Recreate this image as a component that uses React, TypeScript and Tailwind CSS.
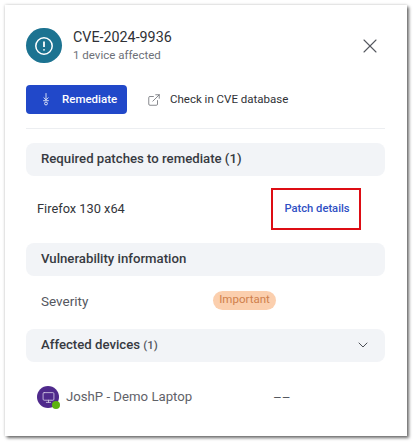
import { ChevronDown, ExternalLink, Monitor, X } from 'lucide-react';

function SectionHeader({ children, right }: { children: React.ReactNode; right?: React.ReactNode }) {
  return (
    <div className="flex h-[33px] items-center justify-between rounded-[8px] bg-[#f2f4f7] pb-[2px] pl-[15px] pr-[14px] text-[13.2px] font-medium text-[#373a41]">
      <div>{children}</div>
      {right}
    </div>
  );
}

export default function App() {
  return (
    <div className="h-[445px] w-[416px] bg-white pl-[5px] pt-[5px] font-['Roboto',sans-serif]">
      <div className="h-[431px] w-[402px] bg-white pl-[21px] pr-[22px] pt-[23px] shadow-[2px_2px_3px_rgba(0,0,0,0.55),0_0_3px_rgba(0,0,0,0.2)]">
        {/* Header */}
        <div className="flex items-center">
          <div className="flex h-[35px] w-[36px] items-center justify-center rounded-full bg-[#1c7391]">
            <svg viewBox="0 0 20 20" className="h-[20px] w-[20px]" fill="none" stroke="white" strokeWidth="1.5">
              <circle cx="10" cy="10" r="8.2" />
              <path d="M10 5.5v5.5M10 13.2v1.3" strokeWidth="1.8" />
            </svg>
          </div>
          <div className="ml-[11px] flex-1">
            <div className="text-[14.3px] leading-[19px] text-[#2f3136]">CVE-2024-9936</div>
            <div className="text-[11.5px] leading-[16px] text-[#6d7079]">1 device affected</div>
          </div>
          <X className="mr-[3px] h-[24px] w-[24px] text-[#55585f]" strokeWidth={1.1} />
        </div>

        {/* Actions */}
        <div className="mt-[22px] flex items-center border-b border-[#eceef1] pb-[14px]">
          <button className="flex h-[29px] w-[101px] items-center rounded-[4px] bg-[#2148c9] pl-[16px] text-[11.5px] font-medium text-white">
            <svg viewBox="0 0 10 16" className="h-[13px] w-[8px]" fill="none" stroke="white" strokeWidth="1">
              <path d="M5 0v8M2 5.5 5 8.5 8 5.5M1.5 9.5h7" />
              <circle cx="5" cy="13" r="1.8" />
            </svg>
            <span className="ml-[12px]">Remediate</span>
          </button>
          <ExternalLink className="ml-[20px] h-[14px] w-[14px] text-[#55585f]" strokeWidth={1.2} />
          <span className="ml-[9px] text-[11.5px] text-[#2f3136]">Check in CVE database</span>
        </div>

        {/* Required patches */}
        <div className="mt-[14px]">
          <SectionHeader>Required patches to remediate (1)</SectionHeader>
        </div>
        <div className="flex h-[67px] items-center justify-between pb-[2px] pl-[11px]">
          <span className="text-[12.8px] text-[#33353a]">Firefox 130 x64</span>
          <div className="mr-[24px] flex h-[42px] w-[90px] items-center justify-center border-2 border-[#dd0d14] pl-[2px] pt-[2px] text-[11.2px] font-medium text-[#2f50c4]">
            Patch details
          </div>
        </div>

        {/* Vulnerability info */}
        <SectionHeader>Vulnerability information</SectionHeader>
        <div className="flex h-[53px] items-center pb-[2px] pl-[15px]">
          <span className="w-[172px] text-[13.5px] text-[#55585f]">Severity</span>
          <span className="-mt-[3px] flex h-[19px] w-[63px] items-center justify-center rounded-full bg-[#fbcfae] text-[11.5px] text-[#cf7f4c]">
            Important
          </span>
        </div>

        {/* Affected devices */}
        <SectionHeader right={<ChevronDown className="h-[16px] w-[16px] text-[#4b4e55]" strokeWidth={1.5} />}>
          Affected devices <span className="text-[11.5px] text-[#55585f]">(1)</span>
        </SectionHeader>
        <div className="mt-[24px] flex items-center pl-[11px]">
          <div className="relative flex h-[22px] w-[22px] items-center justify-center rounded-full bg-[#4f2a8c]">
            <Monitor className="h-[13px] w-[13px] text-[#d8cfe8]" strokeWidth={1.5} />
            <span className="absolute -bottom-[1px] -right-[1px] h-[8px] w-[8px] rounded-full bg-[#5cb30f]" />
          </div>
          <span className="ml-[7px] w-[207px] text-[13.2px] text-[#5f6269]">JoshP - Demo Laptop</span>
          <span className="text-[13.5px] text-[#55585f]">––</span>
        </div>
      </div>
    </div>
  );
}
